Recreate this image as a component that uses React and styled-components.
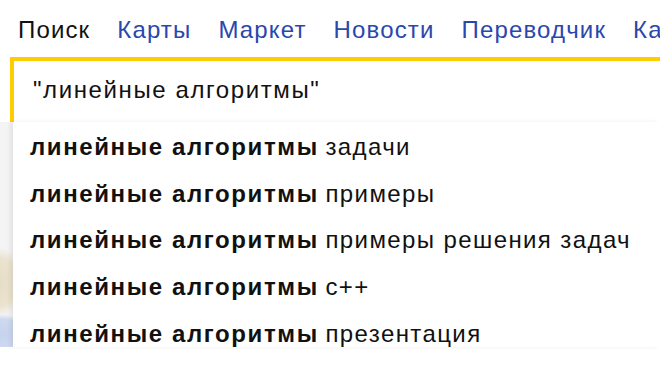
import React from "react";
import styled, { createGlobalStyle } from "styled-components";

const Global = createGlobalStyle`
  html, body { margin: 0; padding: 0; background: #fff; }
  body { font-family: "Liberation Sans", Arial, sans-serif; overflow: hidden; }
`;

const Page = styled.div`
  width: 660px;
  height: 390px;
  overflow: hidden;
  background: #fff;
`;

const Nav = styled.nav`
  display: flex;
  gap: 27px;
  padding: 15px 0 0 18px;
  height: 57px;
  box-sizing: border-box;
  white-space: nowrap;
`;

const NavItem = styled.span`
  font-size: 24px;
  line-height: 30px;
  letter-spacing: 1.15px;
  color: ${(p) => (p.$active ? "#111" : "#2a47ad")};
`;

const SearchBox = styled.div`
  margin-left: 10px;
  height: 65px;
  border-top: 4px solid #ffcc00;
  border-left: 4px solid #ffcc00;
  box-sizing: border-box;
  padding: 15px 0 0 19px;
  font-size: 24px;
  line-height: 28px;
  letter-spacing: 1.6px;
  color: #111;
  white-space: nowrap;
`;

const SuggestArea = styled.div`
  height: 225px;
  display: flex;
  background-color: #f4f4f4;
  background-image:
    linear-gradient(160deg, rgba(255,255,255,0) 0 60%, #fafafa 60% 72%, rgba(255,255,255,0) 72%),
    radial-gradient(ellipse 26px 20px at 2px 212px, #c6d3ee 0%, #cfdaf0 75%, rgba(244,244,244,0) 100%),
    radial-gradient(ellipse 24px 34px at 0px 160px, #e6ddc6 0%, #ebe3cf 70%, rgba(244,244,244,0) 100%);
  background-repeat: no-repeat;
`;

const Suggest = styled.ul`
  flex: 1;
  list-style: none;
  margin: 0 0 0 13px;
  padding: 2px 0 0 17px;
  overflow: hidden;
  background: #fff;
  box-shadow: -3px 0 4px rgba(0, 0, 0, 0.07);
`;

const Row = styled.li`
  height: 46.7px;
  font-size: 24px;
  line-height: 46.7px;
  color: #111;
  white-space: nowrap;
`;

const Strong = styled.b`
  font-weight: 700;
  letter-spacing: 1.6px;
`;

const Tail = styled.span`
  letter-spacing: 1.4px;
`;

const nav = ["Поиск", "Карты", "Маркет", "Новости", "Переводчик", "Картинки"];
const items = ["задачи", "примеры", "примеры решения задач", "c++", "презентация"];

export default function App() {
  return (
    <Page>
      <Global />
      <Nav>
        {nav.map((n, i) => (
          <NavItem key={n} $active={i === 0}>{n}</NavItem>
        ))}
      </Nav>
      <SearchBox>"линейные алгоритмы"</SearchBox>
      <SuggestArea>
        <Suggest>
          {items.map((t) => (
            <Row key={t}>
              <Strong>линейные алгоритмы</Strong> <Tail>{t}</Tail>
            </Row>
          ))}
        </Suggest>
      </SuggestArea>
    </Page>
  );
}
